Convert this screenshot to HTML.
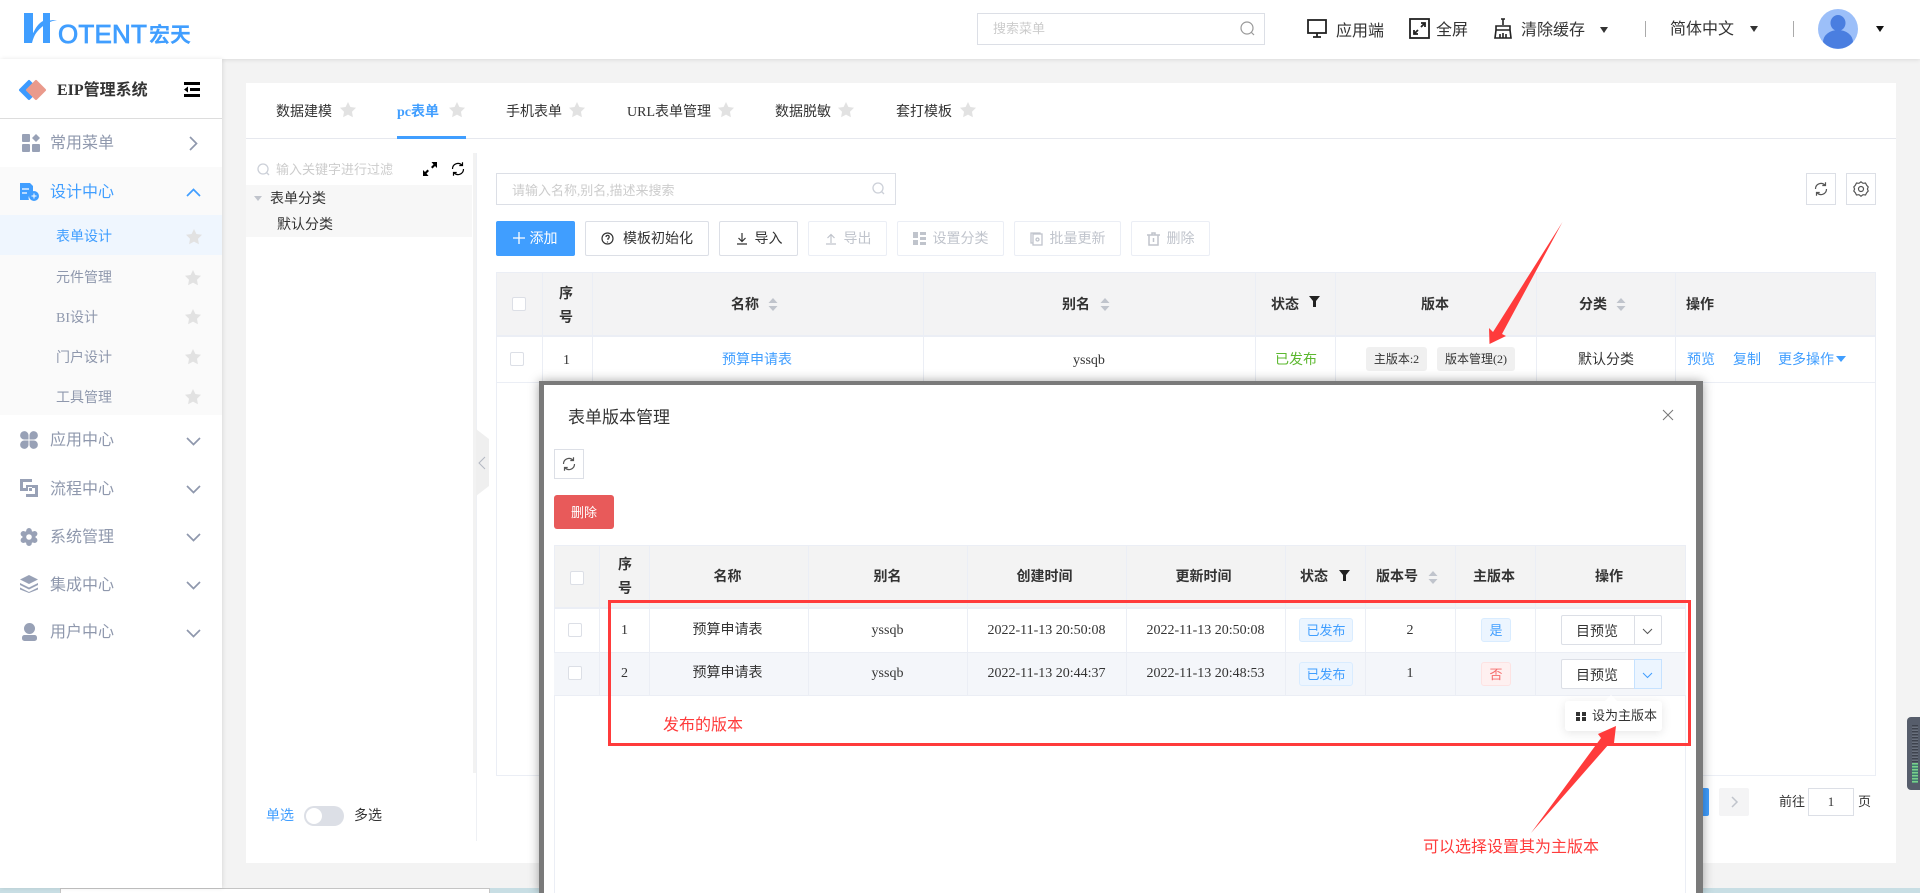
<!DOCTYPE html>
<html lang="zh-CN"><head><meta charset="utf-8"><title>EIP</title>
<style>
*{box-sizing:border-box}
html,body{margin:0;padding:0;width:1920px;height:893px;overflow:hidden;background:#f3f3f3}
body{position:relative;font-family:"Liberation Serif","WenQuanYi Zen Hei","Noto Sans CJK SC",serif;font-size:14px;color:#333}
.a{position:absolute}
.t{position:absolute;white-space:nowrap;line-height:20px;height:20px;margin-top:2px}
.c{text-align:center}
.b{font-weight:bold}
.s{font-size:16px;margin-top:1px}
.m{color:#8f98ad}
.blue{color:#409eff}
.l{position:absolute;background:#ebeef5}
.btn{position:absolute;top:221px;height:35px;border:1px solid #dcdfe6;border-radius:2px;background:#fff;line-height:35px;font-size:14px;white-space:nowrap;text-align:center}
.dis{border-color:#ebeef5;color:#c0c4cc}
.ck{position:absolute;width:14px;height:14px;border:1px solid #dcdfe6;border-radius:2px;background:#fff}
.tag{position:absolute;border:1px solid #d9ecff;background:#ecf5ff;color:#409eff;border-radius:3px;font-size:13px;text-align:center;height:24px;line-height:23px}
svg{position:absolute;overflow:visible}
</style></head><body>

<!-- main card -->
<div class="a" style="left:246px;top:83px;width:1650px;height:780px;background:#fff"></div>
<div class="a" style="left:246px;top:138px;width:1650px;height:1px;background:#e6e8ee"></div>
<div class="a" style="left:397px;top:136px;width:69px;height:3px;background:#409eff"></div>
<div class="t" style="left:276px;top:101px">数据建模</div>
<div class="t blue b" style="left:397px;top:101px">pc表单</div>
<div class="t" style="left:506px;top:101px">手机表单</div>
<div class="t" style="left:627px;top:101px">URL表单管理</div>
<div class="t" style="left:775px;top:101px">数据脱敏</div>
<div class="t" style="left:896px;top:101px">套打模板</div>
<svg style="left:0;top:0" width="1" height="1"><defs><path id="st" d="M8 0l2.400 5 5.600.8-4 3.900.9 5.500L8 12.600l-4.900 2.600.9-5.500-4-3.900L5.600 5z"/><path id="rf" d="M2.500 8A5.500 5.500 0 0 1 12 4.200M12.500 1.300v3.200H9.300M13.500 8A5.500 5.500 0 0 1 4 11.800M3.500 14.700v-3.200h3.200" fill="none" stroke-width="1.200"/></defs></svg>
<svg style="left:340px;top:102px" width="16" height="16" fill="#e2e2e2"><use href="#st"/></svg>
<svg style="left:449px;top:102px" width="16" height="16" fill="#e2e2e2"><use href="#st"/></svg>
<svg style="left:569px;top:102px" width="16" height="16" fill="#e2e2e2"><use href="#st"/></svg>
<svg style="left:718px;top:102px" width="16" height="16" fill="#e2e2e2"><use href="#st"/></svg>
<svg style="left:838px;top:102px" width="16" height="16" fill="#e2e2e2"><use href="#st"/></svg>
<svg style="left:960px;top:102px" width="16" height="16" fill="#e2e2e2"><use href="#st"/></svg>

<!-- tree panel -->
<svg style="left:257px;top:163px" width="13" height="13" fill="none" stroke="#ccd0d8" stroke-width="1.300"><circle cx="6" cy="6" r="5"/><path d="M9.500 9.500L12 12"/></svg>
<div class="t" style="left:276px;top:158px;font-size:13px;color:#ccc">输入关键字进行过滤</div>
<svg style="left:423px;top:162px" width="14" height="14" fill="#000"><path d="M14 0v6l-2-2-2.500 2.500-1.500-1.500L10.500 2.500 8.500 0zM0 14V8l2 2 2.500-2.500L6 9l-2.500 2.500 2 2.500z"/></svg>
<svg style="left:450px;top:161px" width="16" height="16" stroke="#000" stroke-width="1.500"><use href="#rf" style="stroke-width:1.600"/></svg>
<div class="a" style="left:246px;top:185px;width:226px;height:52px;background:#f7f7f7"></div>
<div class="a" style="left:254px;top:196px;border-left:4px solid transparent;border-right:4px solid transparent;border-top:5px solid #c0c4cc"></div>
<div class="t" style="left:270px;top:188px">表单分类</div>
<div class="t" style="left:277px;top:214px">默认分类</div>
<div class="a" style="left:473px;top:153px;width:3px;height:620px;background:#f2f2f2"></div>
<div class="a" style="left:476px;top:153px;width:1px;height:688px;background:#eef0f4"></div>
<div class="a" style="left:476px;top:429px;width:13px;height:67px;background:#efefef;clip-path:polygon(0 0,100% 15%,100% 85%,0 100%)"></div>
<svg style="left:478px;top:456px" width="8" height="14" fill="none" stroke="#b3b8c2"><path d="M7 1L1 7l6 6"/></svg>
<div class="t blue" style="left:266px;top:805px">单选</div>
<div class="a" style="left:304px;top:806px;width:40px;height:20px;border-radius:10px;background:#dcdfe6"></div>
<div class="a" style="left:306px;top:808px;width:16px;height:16px;border-radius:8px;background:#fff"></div>
<div class="t" style="left:354px;top:805px">多选</div>

<!-- toolbar -->
<div class="a" style="left:496px;top:173px;width:400px;height:32px;border:1px solid #dcdfe6;background:#fff"></div>
<div class="t" style="left:512px;top:179px;font-size:13px;color:#ccc">请输入名称,别名,描述来搜索</div>
<svg style="left:872px;top:182px" width="13" height="13" fill="none" stroke="#ccd0d8" stroke-width="1.300"><circle cx="6" cy="6" r="5"/><path d="M9.500 9.500L12 12"/></svg>
<div class="a" style="left:1806px;top:173px;width:30px;height:32px;border:1px solid #dcdfe6;background:#fff"></div>
<svg style="left:1813px;top:181px" width="16" height="16" stroke="#555"><use href="#rf"/></svg>
<div class="a" style="left:1846px;top:173px;width:30px;height:32px;border:1px solid #dcdfe6;background:#fff"></div>
<svg style="left:1853px;top:181px" width="16" height="16" fill="none" stroke="#555" stroke-width="1.200"><path d="M8 .8l2 1.500 2.500-.3 1.200 2.300 1.500 1.700-.8 2 .8 2-1.500 1.700-1.200 2.300-2.500-.3-2 1.500-2-1.500-2.500.3-1.200-2.300L.8 10l.8-2-.8-2 1.500-1.700L3.500 2l2.500.3z"/><circle cx="8" cy="8" r="2.500"/></svg>

<div class="btn" style="left:496px;width:79px;background:#409eff;border-color:#409eff;color:#fff;padding-left:16px">添加</div>
<svg style="left:512px;top:231px" width="14" height="14" stroke="#fff" stroke-width="1.300"><path d="M7 1v12M1 7h12"/></svg>
<div class="btn" style="left:585px;width:124px;padding-left:22px">模板初始化</div>
<svg style="left:601px;top:232px" width="13" height="13" fill="none" stroke="#333" stroke-width="1.200"><circle cx="6.500" cy="6.500" r="5.500"/><path d="M5 5a1.600 1.600 0 1 1 2 1.500v1.500M6.500 9.500v1"/></svg>
<div class="btn" style="left:719px;width:79px;padding-left:20px">导入</div>
<svg style="left:736px;top:232px" width="12" height="13" fill="none" stroke="#333" stroke-width="1.200"><path d="M6 1v8M2.500 6L6 9.500 9.500 6M1 12h10"/></svg>
<div class="btn dis" style="left:808px;width:79px;padding-left:20px">导出</div>
<svg style="left:825px;top:232px" width="12" height="13" fill="none" stroke="#c0c4cc" stroke-width="1.200"><path d="M6 11V3M2.500 6L6 2.500 9.500 6M1 12h10"/></svg>
<div class="btn dis" style="left:897px;width:107px;padding-left:20px">设置分类</div>
<svg style="left:913px;top:232px" width="13" height="13" fill="#c0c4cc"><path d="M0 0h5v6H0zM0 8h5v5H0zM7 0h6v3H7zM7 5h6v3H7zM7 10h6v3H7z"/></svg>
<div class="btn dis" style="left:1014px;width:107px;padding-left:20px">批量更新</div>
<svg style="left:1030px;top:232px" width="13" height="14" fill="none" stroke="#c0c4cc" stroke-width="1.300"><rect x="3" y="2" width="9" height="11"/><path d="M3 11H1V1h9v1"/><circle cx="7.500" cy="7.500" r="1.500"/></svg>
<div class="btn dis" style="left:1131px;width:79px;padding-left:20px">删除</div>
<svg style="left:1147px;top:232px" width="13" height="14" fill="none" stroke="#c0c4cc" stroke-width="1.500"><path d="M0 3h13M5 3V1h3v2M2 3v10h9V3M6.500 6v4"/></svg>

<!-- main table -->
<div class="a" style="left:496px;top:272px;width:1380px;height:504px;border:1px solid #ebeef5"></div>
<div class="a" style="left:496px;top:272px;width:1380px;height:64px;background:#f3f3f4;border:1px solid #ebeef5"></div>
<div class="l" style="left:496px;top:382px;width:1380px;height:1px"></div>
<div class="l" style="left:496px;top:336px;width:1380px;height:1px"></div>
<div class="l" style="left:542px;top:272px;width:1px;height:110px"></div>
<div class="l" style="left:592px;top:272px;width:1px;height:110px"></div>
<div class="l" style="left:923px;top:272px;width:1px;height:110px"></div>
<div class="l" style="left:1255px;top:272px;width:1px;height:110px"></div>
<div class="l" style="left:1335px;top:272px;width:1px;height:110px"></div>
<div class="l" style="left:1536px;top:272px;width:1px;height:110px"></div>
<div class="l" style="left:1675px;top:272px;width:1px;height:110px"></div>
<div class="ck" style="left:512px;top:297px"></div>
<div class="ck" style="left:510px;top:352px"></div>
<div class="t b" style="left:559px;top:283px">序</div>
<div class="t b" style="left:559px;top:307px">号</div>
<div class="t b" style="left:731px;top:294px">名称</div>
<svg style="left:768px;top:298px" width="10" height="13" fill="#c0c4cc"><path d="M5 0l4.500 5h-9zM5 13L.5 8h9z"/></svg>
<div class="t b" style="left:1062px;top:294px">别名</div>
<svg style="left:1100px;top:298px" width="10" height="13" fill="#c0c4cc"><path d="M5 0l4.500 5h-9zM5 13L.5 8h9z"/></svg>
<div class="t b" style="left:1271px;top:294px">状态</div>
<svg style="left:1309px;top:296px" width="11" height="11" fill="#222"><path d="M0 0h11L7 5v6H4V5z"/></svg>
<div class="t b" style="left:1421px;top:294px">版本</div>
<div class="t b" style="left:1579px;top:294px">分类</div>
<svg style="left:1616px;top:298px" width="10" height="13" fill="#c0c4cc"><path d="M5 0l4.500 5h-9zM5 13L.5 8h9z"/></svg>
<div class="t b" style="left:1686px;top:294px">操作</div>
<div class="t" style="left:563px;top:349px">1</div>
<div class="t blue" style="left:722px;top:349px">预算申请表</div>
<div class="t" style="left:1073px;top:349px">yssqb</div>
<div class="t" style="left:1275px;top:349px;color:#5cb82f">已发布</div>
<div class="a c" style="left:1366px;top:347px;width:61px;height:24px;background:#f0f0f0;border-radius:3px;font-size:12px;line-height:24px">主版本:2</div>
<div class="a c" style="left:1437px;top:347px;width:78px;height:24px;background:#f0f0f0;border-radius:3px;font-size:12px;line-height:24px">版本管理(2)</div>
<div class="t" style="left:1578px;top:349px">默认分类</div>
<div class="t blue" style="left:1687px;top:349px">预览</div>
<div class="t blue" style="left:1733px;top:349px">复制</div>
<div class="t blue" style="left:1778px;top:349px">更多操作</div>
<div class="a" style="left:1836px;top:356px;border-left:5px solid transparent;border-right:5px solid transparent;border-top:6px solid #409eff"></div>

<!-- pagination -->
<div class="a" style="left:1700px;top:788px;width:9px;height:28px;background:#409eff;border-radius:2px"></div>
<div class="a" style="left:1719px;top:788px;width:30px;height:28px;background:#f4f4f5;border-radius:2px"></div>
<svg style="left:1731px;top:796px" width="7" height="12" fill="none" stroke="#c0c4cc" stroke-width="1.500"><path d="M1 1l5 5-5 5"/></svg>
<div class="t" style="left:1779px;top:790px;font-size:13px">前往</div>
<div class="a c" style="left:1808px;top:788px;width:46px;height:28px;border:1px solid #dcdfe6;background:#fff;line-height:26px;font-size:13px">1</div>
<div class="t" style="left:1858px;top:790px;font-size:13px">页</div>

<!-- bottom strip -->
<div class="a" style="left:0;top:888px;width:1920px;height:5px;background:#c8dee4"></div>
<div class="a" style="left:60px;top:888px;width:430px;height:5px;background:#fff;border-top:1px solid #c4c4c4;border-left:1px solid #c4c4c4;border-right:1px solid #c4c4c4"></div>

<!-- right widget -->
<div class="a" style="left:1907px;top:717px;width:13px;height:73px;background:#565d6b;border-radius:4px 0 0 4px"></div>
<div class="a" style="left:1912px;top:725px;width:6px;height:37px;background:repeating-linear-gradient(#3d424d 0 1.500px,#6a717e 1.500px 3px)"></div>
<div class="a" style="left:1912px;top:763px;width:6px;height:20px;background:repeating-linear-gradient(#7cd08b 0 1.500px,#3f7f70 1.500px 3px)"></div>

<!-- header -->
<div class="a" style="left:0;top:0;width:1920px;height:59px;background:#fff;box-shadow:0 1px 4px rgba(0,0,0,.1)"></div>
<svg style="left:24px;top:13px" width="34" height="31" fill="#409eff"><path d="M0 0H9V21C11 15 15 10 19 8V0H26V30H19V12C14 15 10 22 8 30H0Z"/><path d="M8 22C14 11 22 6.500 33 7C24 8.500 15 14 9 25Z"/></svg>
<div class="t" style="left:58px;top:18px;height:28px;line-height:28px;font-family:'Liberation Sans',sans-serif;font-size:26px;color:#409eff;letter-spacing:.2px;-webkit-text-stroke:.8px #409eff">OTENT</div>
<div class="t b" style="left:149px;top:20px;height:24px;line-height:24px;font-family:'Noto Sans CJK SC',sans-serif;font-size:21px;color:#409eff">宏天</div>

<div class="a" style="left:977px;top:13px;width:288px;height:32px;border:1px solid #dcdfe6;background:#fff"></div>
<div class="t" style="left:993px;top:17px;font-size:13px;color:#ccc">搜索菜单</div>
<svg style="left:1240px;top:21px" width="15" height="15" fill="none" stroke="#999" stroke-width="1.200"><circle cx="7" cy="7" r="6"/><path d="M11 11l3 3"/></svg>
<svg style="left:1307px;top:19px" width="20" height="19" fill="none" stroke="#222" stroke-width="1.800"><rect x="1" y="1" width="18" height="13"/><path d="M10 14v4M6 18h8"/></svg>
<div class="t s" style="left:1336px;top:21px">应用端</div>
<svg style="left:1409px;top:18px" width="21" height="21" fill="none" stroke="#222" stroke-width="1.800"><rect x="1" y="1" width="19" height="19"/><path d="M12 9l4-4M12 5h4v4M9 12l-4 4M5 12v4h4"/></svg>
<div class="t s" style="left:1436px;top:20px">全屏</div>
<svg style="left:1493px;top:18px" width="20" height="21" fill="none" stroke="#222" stroke-width="1.600"><path d="M10 1v6M8 1h4M3 8h14v4H3zM3 12l-1 8h16l-1-8M7 16v4M10 15v5M13 16v4"/></svg>
<div class="t s" style="left:1521px;top:20px">清除缓存</div>
<div class="a" style="left:1600px;top:27px;border-left:4.500px solid transparent;border-right:4.500px solid transparent;border-top:6px solid #333"></div>
<div class="a" style="left:1645px;top:21px;width:1px;height:16px;background:#aaa"></div>
<div class="t s" style="left:1670px;top:19px">简体中文</div>
<div class="a" style="left:1750px;top:26px;border-left:4.500px solid transparent;border-right:4.500px solid transparent;border-top:6px solid #333"></div>
<div class="a" style="left:1793px;top:21px;width:1px;height:16px;background:#aaa"></div>
<svg style="left:1818px;top:9px" width="40" height="40"><circle cx="20" cy="20" r="20" fill="#9cbff9"/><ellipse cx="20" cy="14" rx="7.500" ry="8" fill="#4a7ee0"/><path d="M5 33a15 12 0 0 1 30 0a20 20 0 0 1-30 0z" fill="#4a7ee0"/></svg>
<div class="a" style="left:1876px;top:26px;border-left:4.500px solid transparent;border-right:4.500px solid transparent;border-top:6px solid #111"></div>

<!-- sidebar -->
<div class="a" style="left:0;top:59px;width:222px;height:829px;background:#fff;box-shadow:1px 0 4px rgba(0,0,0,.1)"></div>
<div class="a" style="left:0;top:118px;width:222px;height:1px;background:#ddd"></div>
<svg style="left:18px;top:79px" width="30" height="23"><rect x="3.500" y="3.500" width="15" height="15" rx="1.500" transform="rotate(45 11 11)" fill="#3d9bff"/><rect x="10.500" y="3.500" width="15" height="15" rx="1.500" transform="rotate(45 18 11)" fill="#ea9a8c"/></svg>
<div class="t b s" style="left:57px;top:80px">EIP管理系统</div>
<svg style="left:184px;top:82px" width="16" height="15" fill="#000"><path d="M0 0h16v3H0zM6 6h10v3H6zM0 12h16v3H0zM4 4.500v6L0 7.500z"/></svg>

<div class="a" style="left:0;top:167px;width:222px;height:248px;background:#fafafa"></div>
<div class="a" style="left:0;top:215px;width:222px;height:40px;background:#eff6fe"></div>

<svg style="left:22px;top:134px" width="18" height="18" fill="#98a1b6"><rect width="8" height="8" rx="1"/><path d="M14 0l4 4-4 4-4-4z"/><rect y="10" width="8" height="8" rx="1"/><rect x="10" y="10" width="8" height="8" rx="1"/></svg>
<div class="t s m" style="left:50px;top:133px">常用菜单</div>
<svg style="left:189px;top:136px" width="9" height="15" fill="none" stroke="#8f98ad" stroke-width="1.700"><path d="M1 1l6.500 6.500L1 14"/></svg>

<svg style="left:20px;top:183px" width="19" height="18" fill="#409eff"><path d="M0 0h10l3 3v7a5 5 0 0 0-4 7H0z"/><circle cx="14" cy="13" r="5"/><path d="M14 10.500v5M11.500 13h5" stroke="#fff" stroke-width="1"/><path d="M2 6h7M2 10h5" stroke="#fff" stroke-width="1.300"/></svg>
<div class="t s blue" style="left:50px;top:182px">设计中心</div>
<svg style="left:186px;top:188px" width="15" height="9" fill="none" stroke="#409eff" stroke-width="1.700"><path d="M1 8l6.500-6.500L14 8"/></svg>

<div class="t blue" style="left:56px;top:226px">表单设计</div>
<div class="t m" style="left:56px;top:267px">元件管理</div>
<div class="t m" style="left:56px;top:307px">BI设计</div>
<div class="t m" style="left:56px;top:347px">门户设计</div>
<div class="t m" style="left:56px;top:387px">工具管理</div>
<svg style="left:186px;top:229px" width="16" height="16" fill="#e2e2e2"><use href="#st"/></svg>
<svg style="left:185px;top:270px" width="16" height="16" fill="#e2e2e2"><use href="#st"/></svg>
<svg style="left:185px;top:309px" width="16" height="16" fill="#e2e2e2"><use href="#st"/></svg>
<svg style="left:185px;top:349px" width="16" height="16" fill="#e2e2e2"><use href="#st"/></svg>
<svg style="left:185px;top:389px" width="16" height="16" fill="#e2e2e2"><use href="#st"/></svg>

<svg style="left:20px;top:431px" width="18" height="18" fill="#98a1b6"><path d="M8.500 8.500H4a4.200 4.200 0 1 1 4.500-4.500zM9.500 8.500V4a4.200 4.200 0 1 1 4.500 4.500zM8.500 9.500V14a4.200 4.200 0 1 1-4.500-4.500zM9.500 9.500H14a4.200 4.200 0 1 1-4.500 4.500z"/></svg>
<div class="t s m" style="left:50px;top:430px">应用中心</div>
<svg style="left:186px;top:437px" width="15" height="9" fill="none" stroke="#8f98ad" stroke-width="1.700"><path d="M1 1l6.500 6.500L14 1"/></svg>

<svg style="left:20px;top:479px" width="18" height="18" fill="#98a1b6"><path d="M0 0h12v3H3v6h3v3H0zM6 6h12v12H6v-3h9V9H9v3H6zM8 8h4v4H8z" fill-rule="evenodd"/></svg>
<div class="t s m" style="left:50px;top:479px">流程中心</div>
<svg style="left:186px;top:485px" width="15" height="9" fill="none" stroke="#8f98ad" stroke-width="1.700"><path d="M1 1l6.500 6.500L14 1"/></svg>

<svg style="left:20px;top:528px" width="18" height="18" fill="#98a1b6"><circle cx="9" cy="9" r="6.500"/><circle cx="9" cy="2.800" r="2.800"/><circle cx="9" cy="15.200" r="2.800"/><circle cx="3.400" cy="5.800" r="2.800"/><circle cx="14.600" cy="5.800" r="2.800"/><circle cx="3.400" cy="12.200" r="2.800"/><circle cx="14.600" cy="12.200" r="2.800"/><circle cx="9" cy="9" r="2.800" fill="#fff"/></svg>
<div class="t s m" style="left:50px;top:527px">系统管理</div>
<svg style="left:186px;top:533px" width="15" height="9" fill="none" stroke="#8f98ad" stroke-width="1.700"><path d="M1 1l6.500 6.500L14 1"/></svg>

<svg style="left:20px;top:575px" width="18" height="18" fill="#98a1b6"><path d="M9 0l9 4.500L9 9 0 4.500zM0 8l9 4.500L18 8v2l-9 4.500L0 10zM0 12.500L9 17l9-4.500v2L9 18 0 14.500z"/></svg>
<div class="t s m" style="left:50px;top:575px">集成中心</div>
<svg style="left:186px;top:581px" width="15" height="9" fill="none" stroke="#8f98ad" stroke-width="1.700"><path d="M1 1l6.500 6.500L14 1"/></svg>

<svg style="left:22px;top:623px" width="15" height="18" fill="#98a1b6"><circle cx="7.500" cy="5.500" r="5.500"/><rect y="12" width="15" height="6" rx="2.500"/></svg>
<div class="t s m" style="left:50px;top:622px">用户中心</div>
<svg style="left:186px;top:629px" width="15" height="9" fill="none" stroke="#8f98ad" stroke-width="1.700"><path d="M1 1l6.500 6.500L14 1"/></svg>

<!-- modal -->
<div class="a" style="left:539px;top:381px;width:1164px;height:512px;background:#7a7a7a;box-shadow:0 0 10px rgba(0,0,0,.35)"></div>
<div class="a" style="left:544px;top:385px;width:1152px;height:508px;background:#fff"></div>
<div class="t" style="left:568px;top:406px;font-size:17px">表单版本管理</div>
<svg style="left:1663px;top:410px" width="10" height="10" fill="none" stroke="#777"><path d="M0 0l10 10M10 0L0 10"/></svg>
<div class="a" style="left:554px;top:449px;width:30px;height:30px;border:1px solid #dcdfe6"></div>
<svg style="left:561px;top:456px" width="16" height="16" stroke="#555"><use href="#rf"/></svg>
<div class="a c" style="left:554px;top:495px;width:60px;height:34px;background:#e85a5a;border-radius:3px;color:#fff;line-height:35px;font-size:13px">删除</div>

<div class="a" style="left:554px;top:545px;width:1132px;height:348px;border-left:1px solid #ebeef5;border-right:1px solid #ebeef5"></div>
<div class="a" style="left:554px;top:545px;width:1132px;height:63px;background:#f3f3f3;border:1px solid #ebeef5"></div>
<div class="a" style="left:554px;top:652px;width:1132px;height:43px;background:#f4f6fa"></div>
<div class="l" style="left:554px;top:652px;width:1132px;height:1px"></div>
<div class="l" style="left:554px;top:695px;width:1132px;height:1px"></div>
<div class="l" style="left:554px;top:608px;width:1132px;height:1px"></div>
<div class="l" style="left:599px;top:545px;width:1px;height:150px"></div>
<div class="l" style="left:649px;top:545px;width:1px;height:150px"></div>
<div class="l" style="left:808px;top:545px;width:1px;height:150px"></div>
<div class="l" style="left:967px;top:545px;width:1px;height:150px"></div>
<div class="l" style="left:1126px;top:545px;width:1px;height:150px"></div>
<div class="l" style="left:1285px;top:545px;width:1px;height:150px"></div>
<div class="l" style="left:1365px;top:545px;width:1px;height:150px"></div>
<div class="l" style="left:1455px;top:545px;width:1px;height:150px"></div>
<div class="l" style="left:1535px;top:545px;width:1px;height:150px"></div>
<div class="ck" style="left:570px;top:571px"></div>
<div class="ck" style="left:568px;top:623px"></div>
<div class="ck" style="left:568px;top:666px"></div>
<div class="t b" style="left:618px;top:554px">序</div>
<div class="t b" style="left:618px;top:578px">号</div>
<div class="t b c" style="left:648px;top:566px;width:159px">名称</div>
<div class="t b c" style="left:808px;top:566px;width:159px">别名</div>
<div class="t b c" style="left:965px;top:566px;width:159px">创建时间</div>
<div class="t b c" style="left:1124px;top:566px;width:159px">更新时间</div>
<div class="t b" style="left:1300px;top:566px">状态</div>
<svg style="left:1339px;top:570px" width="11" height="11" fill="#222"><path d="M0 0h11L7 5v6H4V5z"/></svg>
<div class="t b" style="left:1376px;top:566px">版本号</div>
<svg style="left:1428px;top:571px" width="10" height="13" fill="#c0c4cc"><path d="M5 0l4.500 5h-9zM5 13L.5 8h9z"/></svg>
<div class="t b" style="left:1473px;top:566px">主版本</div>
<div class="t b" style="left:1595px;top:566px">操作</div>

<div class="t" style="left:621px;top:619px">1</div>
<div class="t c" style="left:648px;top:619px;width:159px">预算申请表</div>
<div class="t c" style="left:808px;top:619px;width:159px">yssqb</div>
<div class="t c" style="left:967px;top:619px;width:159px">2022-11-13 20:50:08</div>
<div class="t c" style="left:1126px;top:619px;width:159px">2022-11-13 20:50:08</div>
<div class="tag" style="left:1299px;top:618px;width:54px">已发布</div>
<div class="t c" style="left:1365px;top:619px;width:90px">2</div>
<div class="tag" style="left:1481px;top:618px;width:30px">是</div>
<div class="a" style="left:1561px;top:615px;width:101px;height:30px;border:1px solid #dcdfe6;border-radius:2px;background:#fff"></div>
<div class="a" style="left:1634px;top:615px;width:1px;height:30px;background:#dcdfe6"></div>
<div class="t" style="left:1576px;top:621px">目预览</div>
<svg style="left:1642px;top:628px" width="11" height="7" fill="none" stroke="#555"><path d="M1 1l4.500 4.500L10 1"/></svg>

<div class="t" style="left:621px;top:662px">2</div>
<div class="t c" style="left:648px;top:662px;width:159px">预算申请表</div>
<div class="t c" style="left:808px;top:662px;width:159px">yssqb</div>
<div class="t c" style="left:967px;top:662px;width:159px">2022-11-13 20:44:37</div>
<div class="t c" style="left:1126px;top:662px;width:159px">2022-11-13 20:48:53</div>
<div class="tag" style="left:1299px;top:662px;width:54px">已发布</div>
<div class="t c" style="left:1365px;top:662px;width:90px">1</div>
<div class="tag" style="left:1481px;top:662px;width:30px;background:#fef0f0;border-color:#fde2e2;color:#f56c6c">否</div>
<div class="a" style="left:1561px;top:659px;width:101px;height:30px;border:1px solid #dcdfe6;border-radius:2px;background:#fff"></div>
<div class="a" style="left:1634px;top:659px;width:28px;height:30px;background:#ecf5ff;border:1px solid #c6e2ff"></div>
<div class="t" style="left:1576px;top:665px">目预览</div>
<svg style="left:1642px;top:672px" width="11" height="7" fill="none" stroke="#409eff"><path d="M1 1l4.500 4.500L10 1"/></svg>

<div class="a" style="left:1565px;top:701px;width:97px;height:30px;background:#fff;border-radius:3px;box-shadow:0 2px 10px rgba(0,0,0,.1)"></div>
<div class="a" style="left:1605px;top:695px;border-left:6px solid transparent;border-right:6px solid transparent;border-bottom:6px solid #fff"></div>
<svg style="left:1576px;top:712px" width="10" height="9" fill="#333"><path d="M0 0h4v4H0zM6 0h4v4H6zM0 5h4v4H0zM6 5h4v4H6z"/></svg>
<div class="t" style="left:1592px;top:704px;font-size:13px">设为主版本</div>

<!-- annotations -->
<div class="a" style="left:608px;top:600px;width:1083px;height:146px;border:3px solid #ff3b3b"></div>
<div class="t s" style="left:663px;top:715px;color:#ff3b3b">发布的版本</div>
<div class="t s" style="left:1423px;top:837px;color:#ff3b3b">可以选择设置其为主版本</div>
<svg style="left:0;top:0" width="1920" height="893" fill="#ff3b3b"><polygon points="1562.500,222 1493,332 1489,328 1489.500,344 1506,336 1502,334"/><polygon points="1531,833 1601,738 1598,734 1616,726 1614,743 1609,744"/></svg>
</body></html>
